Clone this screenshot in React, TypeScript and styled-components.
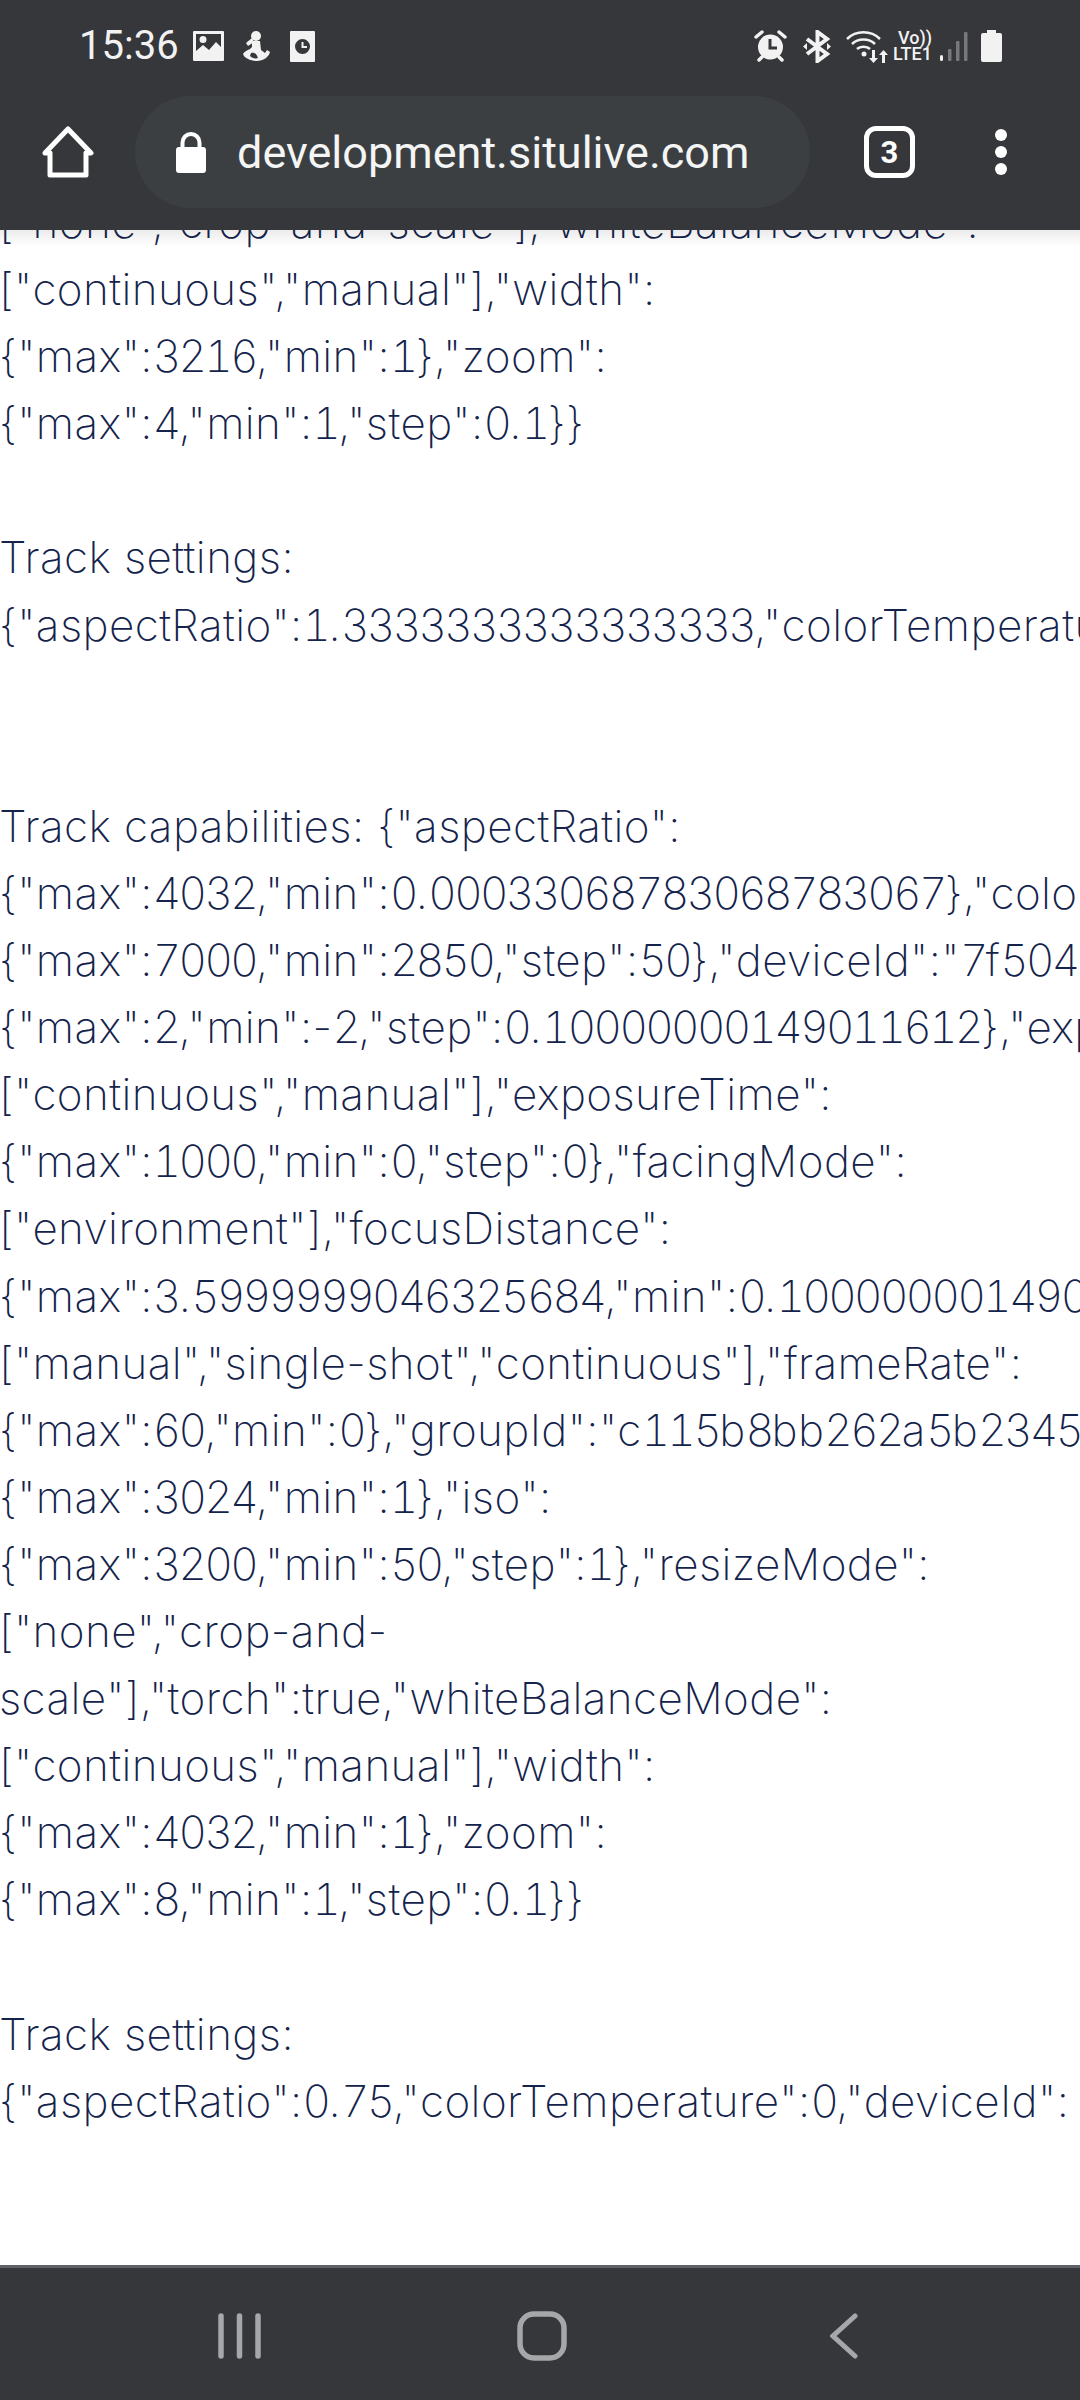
import styled, { createGlobalStyle } from 'styled-components'

const GlobalStyle = createGlobalStyle`
	html, body { margin: 0; padding: 0; background: #ffffff; }
	#root { width: 1080px; height: 2400px; }
`

const lines = [
	'["none","crop-and-scale"],"whiteBalanceMode":',
	'["continuous","manual"],"width":',
	'{"max":3216,"min":1},"zoom":',
	'{"max":4,"min":1,"step":0.1}}',
	'',
	'Track settings:',
	'{"aspectRatio":1.3333333333333333,"colorTemperature":0,',
	'',
	'',
	'Track capabilities: {"aspectRatio":',
	'{"max":4032,"min":0.00033068783068783067},"colorTemperature":',
	'{"max":7000,"min":2850,"step":50},"deviceId":"7f504',
	'{"max":2,"min":-2,"step":0.10000000149011612},"exposureMode":',
	'["continuous","manual"],"exposureTime":',
	'{"max":1000,"min":0,"step":0},"facingMode":',
	'["environment"],"focusDistance":',
	'{"max":3.5999999046325684,"min":0.10000000149011612},',
	'["manual","single-shot","continuous"],"frameRate":',
	'{"max":60,"min":0},"groupId":"c115b8bb262a5b2345',
	'{"max":3024,"min":1},"iso":',
	'{"max":3200,"min":50,"step":1},"resizeMode":',
	'["none","crop-and-',
	'scale"],"torch":true,"whiteBalanceMode":',
	'["continuous","manual"],"width":',
	'{"max":4032,"min":1},"zoom":',
	'{"max":8,"min":1,"step":0.1}}',
	'',
	'Track settings:',
	'{"aspectRatio":0.75,"colorTemperature":0,"deviceId":',
]

const Screen = styled.div`
	display: flex;
	flex-direction: column;
	width: 1080px;
	height: 2400px;
	overflow: hidden;
	background: #ffffff;
`

const Header = styled.header`
	flex: none;
	height: 230px;
	background: #36373b;
	display: flex;
	flex-direction: column;
	position: relative;
	z-index: 1;
`

const StatusBar = styled.div`
	flex: none;
	height: 96px;
	display: flex;
	align-items: center;
	justify-content: space-between;
	padding: 0 78px 4px 79px;
	box-sizing: border-box;
`

const StatusGroup = styled.div`
	display: flex;
	align-items: center;
`

const StatusIcon = styled.svg<{ $gap?: number }>`
	flex: none;
	display: block;
	margin-left: ${p => p.$gap ?? 0}px;
`

const Time = styled.span`
	font-family: Roboto, sans-serif;
	font-size: 40px;
	line-height: 46px;
	color: #f2f2f2;
	width: 97px;
`

const NetworkLabel = styled.div`
	display: flex;
	flex-direction: column;
	align-items: flex-end;
	width: 39px;
	margin-left: 5px;
	font-family: Roboto, sans-serif;
	font-weight: 500;
	font-size: 18px;
	line-height: 16px;
	color: #f2f2f2;
`

const Toolbar = styled.div`
	flex: none;
	display: flex;
	align-items: center;
	height: 112px;
	padding-left: 42px;
`

const UrlPill = styled.div`
	display: flex;
	align-items: center;
	width: 675px;
	height: 112px;
	margin-left: 41px;
	padding-left: 41px;
	box-sizing: border-box;
	border-radius: 56px;
	background: #3c3f42;
`

const Url = styled.span`
	font-family: Roboto, sans-serif;
	font-size: 45px;
	color: #f4f5f5;
	margin-left: 31px;
`

const TabBox = styled.div`
	display: flex;
	align-items: center;
	justify-content: center;
	width: 51px;
	height: 52px;
	margin-left: 54px;
	box-sizing: border-box;
	border: 5px solid #ffffff;
	border-radius: 12px;
	font-family: Roboto, sans-serif;
	font-weight: 700;
	font-size: 31px;
	color: #ffffff;
`

const Dots = styled.div`
	display: flex;
	flex-direction: column;
	gap: 5px;
	margin-left: 80px;
`

const Dot = styled.span`
	width: 12px;
	height: 12px;
	border-radius: 50%;
	background: #ffffff;
`

const Viewport = styled.main`
	flex: 1;
	min-height: 0;
	overflow: hidden;
	position: relative;
	&::before {
		content: '';
		position: absolute;
		top: 0;
		left: 0;
		right: 0;
		height: 16px;
		background: linear-gradient(#00000014, #00000000);
	}
`

const Log = styled.div`
	margin: -41px 0 0 -1px;
	font-family: Inter, sans-serif;
	font-weight: 200;
	font-size: 44px;
	letter-spacing: 0.4px;
	line-height: 67.1px;
	color: #14234b;
	white-space: nowrap;
`

const Line = styled.div`
	min-height: 67.1px;
`

const Digits = styled.span`
	font-variant-numeric: tabular-nums;
	letter-spacing: -2.6px;
`

const NavBar = styled.nav`
	flex: none;
	height: 135px;
	background: #36373b;
	border-top: 3px solid #5f6068;
	display: grid;
	grid-template-columns: repeat(3, 302px);
	justify-content: center;
	justify-items: center;
	align-items: center;
	padding: 4px 0 0 4px;
	box-sizing: border-box;
`

const LogLine = ({ text }: { text: string }) => (
	<Line>
		{text
			.split(/(\d+)/)
			.map((part, i) => (i % 2 ? <Digits key={i}>{part}</Digits> : part))}
	</Line>
)

const App = () => (
	<Screen>
		<GlobalStyle />
		<Header>
			<StatusBar>
				<StatusGroup>
					<Time>15:36</Time>
					<StatusIcon $gap={17} width="31" height="30" viewBox="0 0 31 30">
						<path
							fillRule="evenodd"
							fill="#f2f2f2"
							d="M1 0h29a1 1 0 0 1 1 1v28a1 1 0 0 1-1 1H1a1 1 0 0 1-1-1V1a1 1 0 0 1 1-1zM3 3v17l7-6 6 5 7-8 5 5V3zM10 5a3.5 3.5 0 1 1 0 7 3.5 3.5 0 0 1 0-7z"
						/>
					</StatusIcon>
					<StatusIcon $gap={19} width="27" height="30" viewBox="0 0 27 30">
						<circle cx="13" cy="5" r="5" fill="#f2f2f2" />
						<path fill="#f2f2f2" d="M9 7 3 12l2 3 6-4z" />
						<path
							fill="#f2f2f2"
							d="M9 10h8l1 9 4 3 2-3 3 2c-1 5-7 9-13 9S1 27 0 23c1-2 4-4 7-5l2-2z"
						/>
						<path fill="#36373b" d="M8 22c3-1 5 0 7 5-3 1-6 0-8-2z" />
					</StatusIcon>
					<StatusIcon $gap={20} width="25" height="31" viewBox="0 0 25 31">
						<path
							fillRule="evenodd"
							fill="#f2f2f2"
							d="M1 0h23a1 1 0 0 1 1 1v29a1 1 0 0 1-1 1H1a1 1 0 0 1-1-1V1a1 1 0 0 1 1-1zM12.5 8a7.5 7.5 0 1 0 0 15 7.5 7.5 0 0 0 0-15z"
						/>
						<path stroke="#f2f2f2" strokeWidth="2" fill="none" d="M12.5 11v5h4.5" />
					</StatusIcon>
				</StatusGroup>
				<StatusGroup>
					<StatusIcon width="33" height="32" viewBox="0 0 33 32">
						<circle cx="16.5" cy="17" r="12.5" fill="#f2f2f2" />
						<path stroke="#36373b" strokeWidth="3" fill="none" d="M16 9v9h7" />
						<path
							stroke="#f2f2f2"
							strokeWidth="3.5"
							strokeLinecap="round"
							d="M2 7l6-5M31 7l-6-5M5 30l3-3M28 30l-3-3"
						/>
					</StatusIcon>
					<StatusIcon $gap={16} width="28" height="33" viewBox="0 0 28 33">
						<path
							fill="none"
							stroke="#f2f2f2"
							strokeWidth="4"
							d="M4 9l20 15-9.5 7V2L24 9 4 24"
						/>
						<path fill="#f2f2f2" d="M0 16.500l4-3.500v7zM28 16.500l-4-3.500v7z" />
					</StatusIcon>
					<StatusIcon $gap={15} width="42" height="33" viewBox="0 0 42 33">
						<g fill="none" stroke="#f2f2f2" strokeWidth="2.5">
							<path d="M1 9c9-9 24-9 33 0" />
							<path d="M6 14c6-6 17-6 23 0" />
							<path d="M11 19c3-3 10-3 13 0" />
						</g>
						<circle cx="18" cy="24" r="2.5" fill="#f2f2f2" />
						<path fill="#f2f2f2" d="M26 20h3v8h3l-4.5 5-4.5-5h3zM36 33h3v-8h3l-4.5-5-4.5 5h3z" />
					</StatusIcon>
					<NetworkLabel>
						<span>Vo))</span>
						<span>LTE1</span>
					</NetworkLabel>
					<StatusIcon $gap={8} width="28" height="29" viewBox="0 0 28 29">
						<rect x="0" y="23" width="3" height="6" rx="1.5" fill="#f2f2f2" />
						<rect x="8" y="17" width="3.5" height="12" rx="1" fill="#77787b" />
						<rect x="16" y="9" width="3.5" height="20" rx="1" fill="#77787b" />
						<rect x="24" y="0" width="3.5" height="29" rx="1" fill="#77787b" />
					</StatusIcon>
					<StatusIcon $gap={13} width="21" height="32" viewBox="0 0 21 32">
						<path
							fill="#f2f2f2"
							d="M6 0h9v3h4a2 2 0 0 1 2 2v25a2 2 0 0 1-2 2H2a2 2 0 0 1-2-2V5a2 2 0 0 1 2-2h4z"
						/>
					</StatusIcon>
				</StatusGroup>
			</StatusBar>
			<Toolbar>
				<svg width="52" height="52" viewBox="0 0 52 52">
					<path
						fill="none"
						stroke="#fff"
						strokeWidth="5"
						strokeLinejoin="round"
						d="M3 27 26 3l23 24h-5v22H8V27z"
					/>
				</svg>
				<UrlPill>
					<svg width="30" height="41" viewBox="0 0 30 41">
						<path
							fill="#fff"
							d="M3 15h24a3 3 0 0 1 3 3v20a3 3 0 0 1-3 3H3a3 3 0 0 1-3-3V18a3 3 0 0 1 3-3z"
						/>
						<path fill="none" stroke="#fff" strokeWidth="4" d="M6.5 17v-6.500a8.500 8.500 0 0 1 17 0V17" />
					</svg>
					<Url>development.situlive.com</Url>
				</UrlPill>
				<TabBox>3</TabBox>
				<Dots>
					<Dot />
					<Dot />
					<Dot />
				</Dots>
			</Toolbar>
		</Header>
		<Viewport>
			<Log>
				{lines.map((text, i) => (
					<LogLine key={i} text={text} />
				))}
			</Log>
		</Viewport>
		<NavBar>
			<svg width="44" height="46" viewBox="0 0 44 46">
				<g stroke="#a6a7a9" strokeWidth="5.500" strokeLinecap="round">
					<path d="M3 3v40M21.500 3v40M40 3v40" />
				</g>
			</svg>
			<svg width="50" height="50" viewBox="0 0 50 50">
				<rect x="3" y="3" width="44" height="44" rx="14" fill="none" stroke="#a6a7a9" strokeWidth="5.500" />
			</svg>
			<svg width="28" height="46" viewBox="0 0 28 46">
				<path
					fill="none"
					stroke="#a6a7a9"
					strokeWidth="5"
					strokeLinecap="round"
					strokeLinejoin="miter"
					d="M25 3 3 23l22 20"
				/>
			</svg>
		</NavBar>
	</Screen>
)

export default App
